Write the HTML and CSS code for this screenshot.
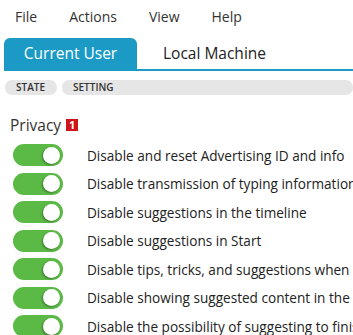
FILE: index.html
```html
<!DOCTYPE html>
<html lang="en">
<head>
    <meta charset="UTF-8">
    <title>Privacy settings</title>
    <link rel="stylesheet" href="styles.css">
</head>
<body>
    <div class="menu">
        <a href="#">File</a>
        <a href="#">Actions</a>
        <a href="#">View</a>
        <a href="#">Help</a>
    </div>
    <div class="tabs">
        <a href="#" class="tab active">Current User</a>
        <a href="#" class="tab">Local Machine</a>
    </div>
    <div class="columns">
        <span class="chip chip-state">STATE</span>
        <span class="chip chip-setting">SETTING</span>
    </div>
    <div class="group">
        <h2 class="group-title">Privacy <span class="badge">1</span></h2>
        <div class="row"><span class="toggle on"></span><span class="label">Disable and reset Advertising ID and info</span></div>
        <div class="row"><span class="toggle on"></span><span class="label">Disable transmission of typing information</span></div>
        <div class="row"><span class="toggle on"></span><span class="label">Disable suggestions in the timeline</span></div>
        <div class="row"><span class="toggle on"></span><span class="label">Disable suggestions in Start</span></div>
        <div class="row"><span class="toggle on"></span><span class="label">Disable tips, tricks, and suggestions when using Windows</span></div>
        <div class="row"><span class="toggle on"></span><span class="label">Disable showing suggested content in the Settings app</span></div>
        <div class="row"><span class="toggle on"></span><span class="label">Disable the possibility of suggesting to finish the setup of the device</span></div>
    </div>
</body>
</html>
```

FILE: styles.css
```css
body {
    font-family: "Open Sans", "Noto Sans", sans-serif;
    margin: 0;
    color: #222;
    overflow: hidden;
    white-space: nowrap;
}
.menu {
    display: flex;
    gap: 32px;
    padding: 7px 0 0 15px;
    height: 32px;
    box-sizing: border-box;
}
.menu a {
    text-decoration: none;
    color: #333;
    font-size: 14px;
}
.tabs {
    display: flex;
    margin: 6px 0 0 4px;
    border-bottom: 2px solid #1b9ac6;
    height: 31px;
}
.tab {
    text-decoration: none;
    color: #222;
    font-size: 15.5px;
    line-height: 31px;
}
.tab.active {
    background: #1b9ac6;
    color: #fff;
    border-radius: 6px 6px 0 0;
    width: 133px;
    text-align: center;
    margin-right: 26px;
}
.columns {
    display: flex;
    gap: 5px;
    padding: 9px 0 0 5px;
}
.chip {
    background: #e6e6e6;
    border-radius: 7px;
    font-size: 10px;
    font-weight: 600;
    color: #333;
    height: 15px;
    line-height: 15px;
    padding-left: 11px;
    box-sizing: border-box;
}
.chip-state {
    width: 68px;
}
.chip-setting {
    width: 400px;
}
.group {
    padding: 0 0 0 10px;
}
.group-title {
    font-weight: normal;
    font-size: 15.5px;
    margin: 20px 0 6px;
    color: #333;
    display: flex;
    align-items: center;
    gap: 5px;
    height: 20px;
}
.badge {
    background: #d0121b;
    color: #fff;
    font-size: 11px;
    font-weight: 700;
    width: 12px;
    height: 12px;
    line-height: 12px;
    text-align: center;
}
.row {
    display: flex;
    align-items: center;
    height: 28.5px;
}
.toggle {
    width: 50px;
    height: 22px;
    border-radius: 11px;
    background: #5bb946;
    position: relative;
    margin: 0 24px 0 3px;
    flex-shrink: 0;
}
.toggle.on::after {
    content: "";
    position: absolute;
    right: 3px;
    top: 2.5px;
    width: 17px;
    height: 17px;
    border-radius: 50%;
    background: #fff;
    box-shadow: -1px 1px 2px rgba(0, 0, 0, 0.35);
}
.label {
    font-size: 13.6px;
    color: #222;
}
```
